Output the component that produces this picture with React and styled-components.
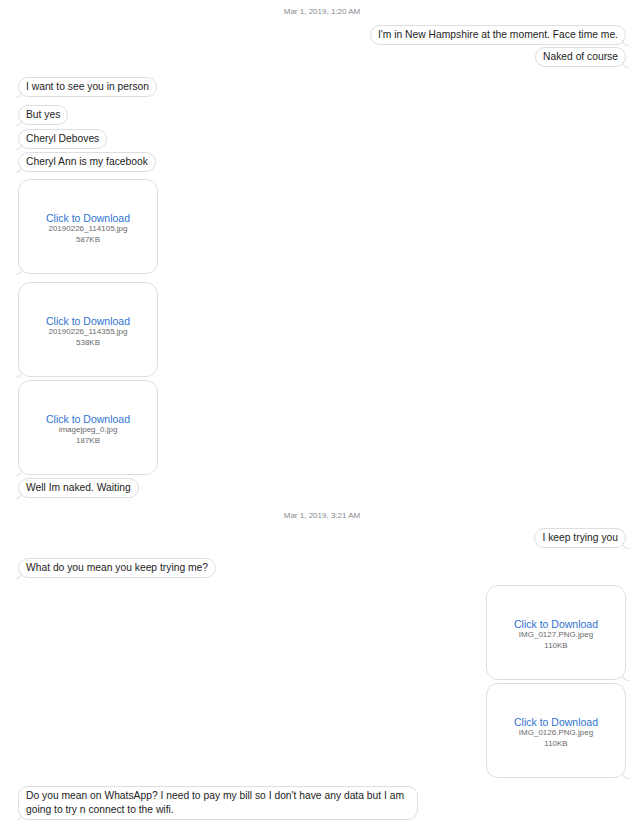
import React from "react";
import styled, { createGlobalStyle } from "styled-components";

const GlobalStyle = createGlobalStyle`
  body {
    margin: 0;
    background: #ffffff;
    font-family: "Liberation Sans", Arial, sans-serif;
    color: #1d1d1d;
  }
`;

const messages = [
  { type: "time", text: "Mar 1, 2019, 1:20 AM", top: 0 },
  { type: "text", from: "me", text: "I'm in New Hampshire at the moment. Face time me.", top: 8 },
  { type: "text", from: "me", text: "Naked of course", top: 2 },
  { type: "text", from: "them", text: "I want to see you in person", top: 10 },
  { type: "text", from: "them", text: "But yes", top: 8 },
  { type: "text", from: "them", text: "Cheryl Deboves", top: 4 },
  { type: "text", from: "them", text: "Cheryl Ann is my facebook", top: 3 },
  { type: "file", from: "them", name: "20190226_114105.jpg", size: "587KB", top: 7 },
  { type: "file", from: "them", name: "20190226_114355.jpg", size: "538KB", top: 8 },
  { type: "file", from: "them", name: "imagejpeg_0.jpg", size: "187KB", top: 3 },
  { type: "text", from: "them", text: "Well Im naked. Waiting", top: 3 },
  { type: "time", text: "Mar 1, 2019, 3:21 AM", top: 13 },
  { type: "text", from: "me", text: "I keep trying you", top: 7 },
  { type: "text", from: "them", text: "What do you mean you keep trying me?", top: 10 },
  { type: "file", from: "me", name: "IMG_0127.PNG.jpeg", size: "110KB", top: 7 },
  { type: "file", from: "me", name: "IMG_0126.PNG.jpeg", size: "110KB", top: 3 },
  {
    type: "text",
    from: "them",
    text: "Do you mean on WhatsApp? I need to pay my bill so I don't have any data but I am going to try n connect to the wifi.",
    top: 8,
  },
];

const App = () => {
  return (
    <Page>
      <GlobalStyle />
      {messages.map((m, i) => {
        if (m.type === "time") {
          return (
            <Timestamp key={i} top={m.top}>
              {m.text}
            </Timestamp>
          );
        }
        const mine = m.from === "me";
        return (
          <Row key={i} top={m.top} mine={mine}>
            {m.type === "text" ? (
              <Bubble mine={mine}>{m.text}</Bubble>
            ) : (
              <FileBubble mine={mine}>
                <Download>Click to Download</Download>
                <FileMeta>{m.name}</FileMeta>
                <FileMeta>{m.size}</FileMeta>
              </FileBubble>
            )}
          </Row>
        );
      })}
    </Page>
  );
};

const Page = styled.div`
  width: 640px;
  box-sizing: border-box;
  padding: 7px 14px 0 18px;
  display: flex;
  flex-direction: column;
`;

const Timestamp = styled.div`
  margin-top: ${(p) => p.top}px;
  text-align: center;
  font-size: 8px;
  line-height: 10px;
  color: #8a8a8a;
`;

const Row = styled.div`
  margin-top: ${(p) => p.top}px;
  display: flex;
  justify-content: ${(p) => (p.mine ? "flex-end" : "flex-start")};
`;

const Tailed = styled.div`
  position: relative;
  background: #ffffff;
  border: 1px solid #dedede;
  border-radius: 10px;

  &::after {
    content: "";
    position: absolute;
    bottom: -2px;
    ${(p) => (p.mine ? "right: -4px;" : "left: -4px;")}
    width: 6px;
    height: 5px;
    border-bottom: 1px solid #e2e2e2;
    ${(p) =>
      p.mine
        ? "border-left: 1px solid #e2e2e2; border-bottom-left-radius: 6px;"
        : "border-right: 1px solid #e2e2e2; border-bottom-right-radius: 6px;"}
  }
`;

const Bubble = styled(Tailed)`
  max-width: 384px;
  padding: 2px 7px;
  font-size: 10.3px;
  line-height: 14px;
  color: #1d1d1d;
`;

const FileBubble = styled(Tailed)`
  width: 138px;
  height: 61px;
  border-radius: 12px;
  display: flex;
  flex-direction: column;
  align-items: center;
  padding-top: 32px;
  box-sizing: content-box;
`;

const Download = styled.div`
  font-size: 10.5px;
  line-height: 12px;
  color: #2f73d0;
`;

const FileMeta = styled.div`
  font-size: 8px;
  line-height: 10.5px;
  color: #6a6a6a;
`;

export default App;
